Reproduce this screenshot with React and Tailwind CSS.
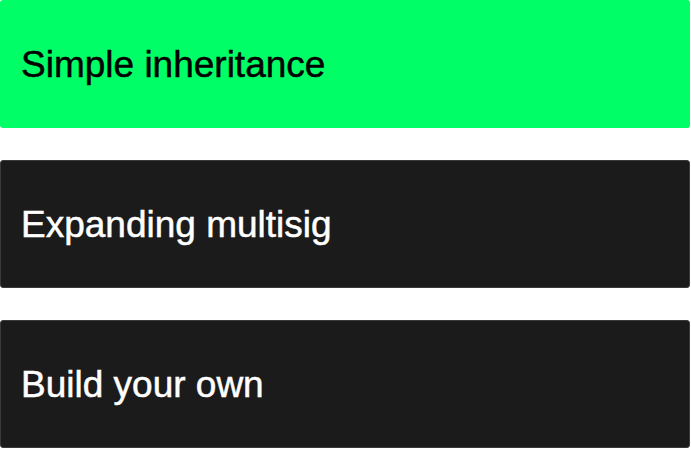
export default function App() {
  const items = [
    { label: "Simple inheritance", active: true },
    { label: "Expanding multisig", active: false },
    { label: "Build your own", active: false },
  ];
  return (
    <div className="bg-white w-[691px] h-[449px] flex flex-col gap-8" style={{ fontFamily: '"Liberation Sans", Arial, sans-serif' }}>
      {items.map((it) => (
        <div
          key={it.label}
          className={
            it.active
              ? "w-[690px] h-32 shrink-0 rounded-[3px] bg-[#00ff66] text-black flex items-center px-[21px] text-[37px] leading-none [-webkit-text-stroke:0.5px_currentColor]"
              : "w-[690px] h-32 shrink-0 rounded-[3px] bg-[#1b1b1b] border border-[#3a3a3a] text-white flex items-center px-[20px] text-[37px] leading-none [-webkit-text-stroke:0.5px_currentColor]"
          }
        >
          {it.label}
        </div>
      ))}
    </div>
  );
}
